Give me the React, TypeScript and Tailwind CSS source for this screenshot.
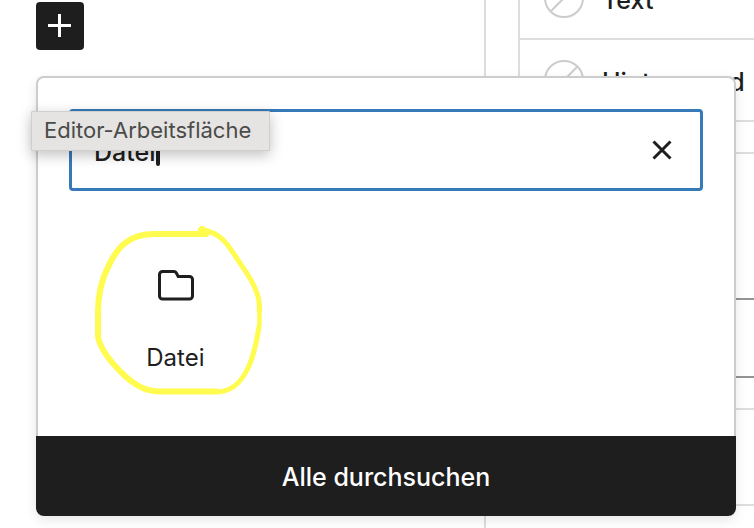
import { useState } from "react";

function PlusIcon() {
  return (
    <svg viewBox="0 0 48 48" className="size-12" aria-hidden="true">
      <path d="M23.500 12v23M12 23.500h23" stroke="currentColor" strokeWidth="3" fill="none" />
    </svg>
  );
}

function CloseIcon() {
  return (
    <svg viewBox="0 0 48 48" className="size-12" aria-hidden="true">
      <path d="M15.500 15.500l17 17M32.500 15.500l-17 17" stroke="currentColor" strokeWidth="3" fill="none" />
    </svg>
  );
}

function FolderIcon() {
  return (
    <svg viewBox="0 0 48 48" className="size-12" aria-hidden="true">
      <path
        d="M11.500 10.500h11.500a2.500 2.500 0 0 1 2.200 1.300l2 3.700h11.300a3 3 0 0 1 3 3v16.500a3 3 0 0 1-3 3h-27a3 3 0 0 1-3-3v-21.500a3 3 0 0 1 3-3z"
        fill="none"
        stroke="currentColor"
        strokeWidth="3"
      />
    </svg>
  );
}

function MarkerCircle() {
  return (
    <svg
      viewBox="0 0 176 176"
      className="pointer-events-none absolute -top-5 left-1/2 size-44 -translate-x-1/2"
      aria-hidden="true"
    >
      <g fill="none" stroke="#fffb4f" strokeLinecap="round" strokeLinejoin="round">
        <path strokeWidth="5" d="M117 11C134 15 139 23 149 38C156 49 163 58 167 67C171 76 172.500 80 172.500 92" />
        <path strokeWidth="4.500" d="M172.500 86V104C172 110 170 118 169 124" />
        <path strokeWidth="5" d="M172 108C170 119 168 136 160 151C153 165 143 173 129 173" />
        <path strokeWidth="6" d="M119 15H67C43 15 31 27 22 46C13 63 11 78 11 93V118C13 128 22 142 39 158C51 168 60 172.500 74 172.500H129" />
        <path strokeWidth="8" d="M115 11L118 13" />
      </g>
    </svg>
  );
}

function ColorRow({ label }: { label: string }) {
  return (
    <button
      type="button"
      className="flex w-full items-center gap-[18px] border-b-2 border-[#ddd] py-5 pl-6 text-[25px] leading-9 font-medium text-[#1e1e1e]"
    >
      <svg viewBox="0 0 40 40" className="size-10 shrink-0" aria-hidden="true">
        <circle cx="20" cy="20" r="19" fill="none" stroke="#ccc" strokeWidth="2" />
        <path d="M6.500 33.500l27-27" stroke="#ccc" strokeWidth="2" />
      </svg>
      <span className="pt-1">{label}</span>
    </button>
  );
}

function Sidebar() {
  return (
    <aside className="w-[270px] shrink-0 overflow-hidden border-l-2 border-[#ddd]">
      {/* scrolled so that the first row is partly out of view */}
      <div className="-mt-11">
        <div className="ml-8 border-t-2 border-l-2 border-[#ddd]">
          <ColorRow label="Text" />
          <ColorRow label="Hintergrund" />
        </div>
        <section className="mt-[30px] border-t-2 border-[#ddd] pt-36 pb-[30px] pl-8">
          <input
            aria-label="Größe"
            className="block h-20 w-full border-y-2 border-l-2 border-[#949494] outline-none"
          />
        </section>
        <section className="h-24 border-t-2 border-[#ddd]" />
        <section className="ml-8 h-10 border-t-2 border-[#ddd]" />
      </div>
    </aside>
  );
}

function Inserter() {
  const [query, setQuery] = useState("Datei");

  return (
    <div className="absolute top-[76px] right-[18px] left-9 rounded-lg bg-white shadow-[0_4px_12px_rgba(0,0,0,0.1)]">
      <div className="rounded-t-lg border-x-2 border-t-2 border-[#ccc] px-[31px] pt-[31px] pb-4">
        <div className="relative flex h-[82px] items-center rounded-[4px] border-3 border-[#367ab8] pr-3.5 pl-[22px]">
          <input
            type="text"
            aria-label="Suchen"
            value={query}
            onChange={(e) => setQuery(e.target.value)}
            className="min-w-0 flex-1 pt-1 text-[25px] leading-9 font-medium text-[#1e1e1e] outline-none"
          />
          <span className="absolute top-6 left-[84px] h-[30px] w-1 rounded-full bg-[#1e1e1e]" />
          <button type="button" aria-label="Zurücksetzen" onClick={() => setQuery("")} className="text-[#1e1e1e]">
            <CloseIcon />
          </button>
        </div>

        <div className="mt-12 grid grid-cols-3 px-px">
          <div className="relative pb-12">
            <button
              type="button"
              className="flex w-full flex-col items-center gap-[35px] pt-[22px] text-2xl leading-7 text-[#1e1e1e]"
            >
              <FolderIcon />
              <span>Datei</span>
            </button>
            <MarkerCircle />
          </div>
        </div>
      </div>
      <button
        type="button"
        className="block w-full rounded-b-lg bg-[#1e1e1e] pt-[23px] pb-[21px] text-[25px] leading-9 font-medium text-white"
      >
        Alle durchsuchen
      </button>
    </div>
  );
}

export default function App() {
  return (
    <div className="relative flex min-h-screen overflow-hidden bg-white font-[Inter,'Liberation_Sans',sans-serif]">
      <main className="min-w-0 flex-1 pt-0.5 pl-9">
        <button type="button" aria-label="Block hinzufügen" className="block rounded-[4px] bg-[#1e1e1e] text-white">
          <PlusIcon />
        </button>
      </main>
      <Sidebar />
      <Inserter />
      <div
        role="tooltip"
        className="absolute top-[111px] left-[31px] rounded-[1px] border border-[#cfcfce] bg-[#e5e4e2] pt-[3px] pr-[18px] pb-[5px] pl-3 text-[22px] leading-[30px] text-[#4b4b49] shadow-[0_4px_14px_rgba(0,0,0,0.25)]"
      >
        Editor-Arbeitsfläche
      </div>
    </div>
  );
}
